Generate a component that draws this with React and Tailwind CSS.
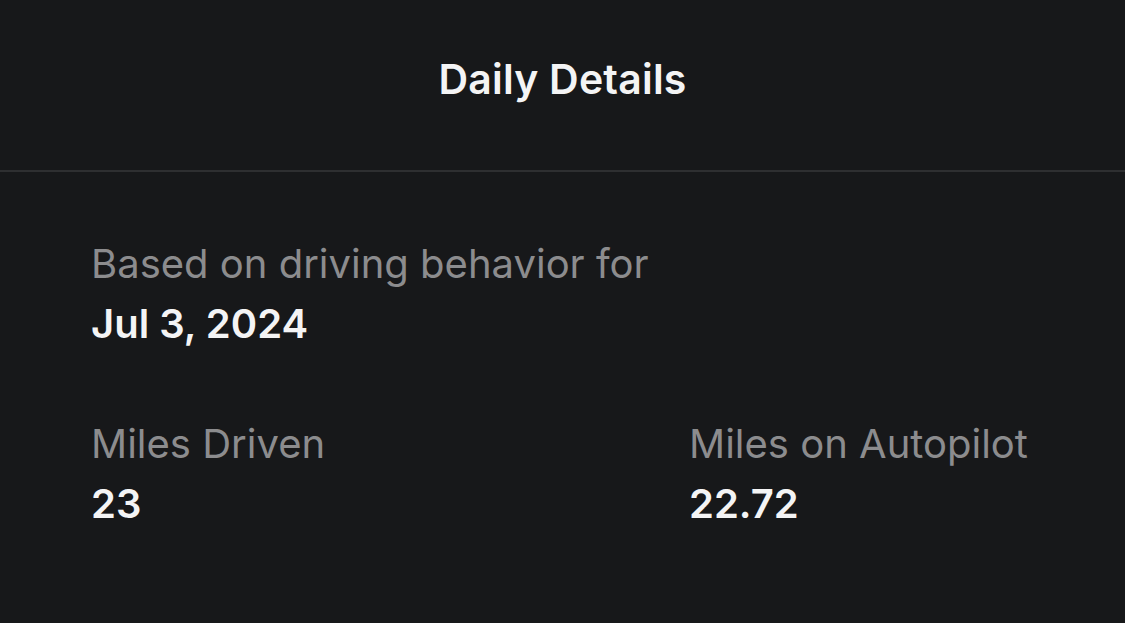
export default function App() {
  return (
    <div className="w-[1125px] h-[623px] bg-[#17181a] overflow-hidden" style={{ fontFamily: 'Inter, "Noto Sans", sans-serif' }}>
      <div className="h-[170px] flex items-center justify-center border-b-2 border-[#2e2f31] box-content">
        <h1 className="text-[41px] font-semibold text-[#f4f4f5] leading-none pb-[12px] tracking-[0.2px]">Daily Details</h1>
      </div>
      <div className="pl-[91px] pt-[62px]">
        <div className="text-[40px] leading-[60px] text-[#8c8c8e]">Based on driving behavior for</div>
        <div className="text-[40px] leading-[60px] font-semibold text-[#f4f4f5]">Jul 3, 2024</div>
        <div className="flex mt-[60px]">
          <div className="w-[598px]">
            <div className="text-[40px] leading-[60px] text-[#8c8c8e]">Miles Driven</div>
            <div className="text-[40px] leading-[60px] font-semibold text-[#f4f4f5]">23</div>
          </div>
          <div>
            <div className="text-[40px] leading-[60px] text-[#8c8c8e]">Miles on Autopilot</div>
            <div className="text-[40px] leading-[60px] font-semibold text-[#f4f4f5]">22.72</div>
          </div>
        </div>
      </div>
    </div>
  );
}
